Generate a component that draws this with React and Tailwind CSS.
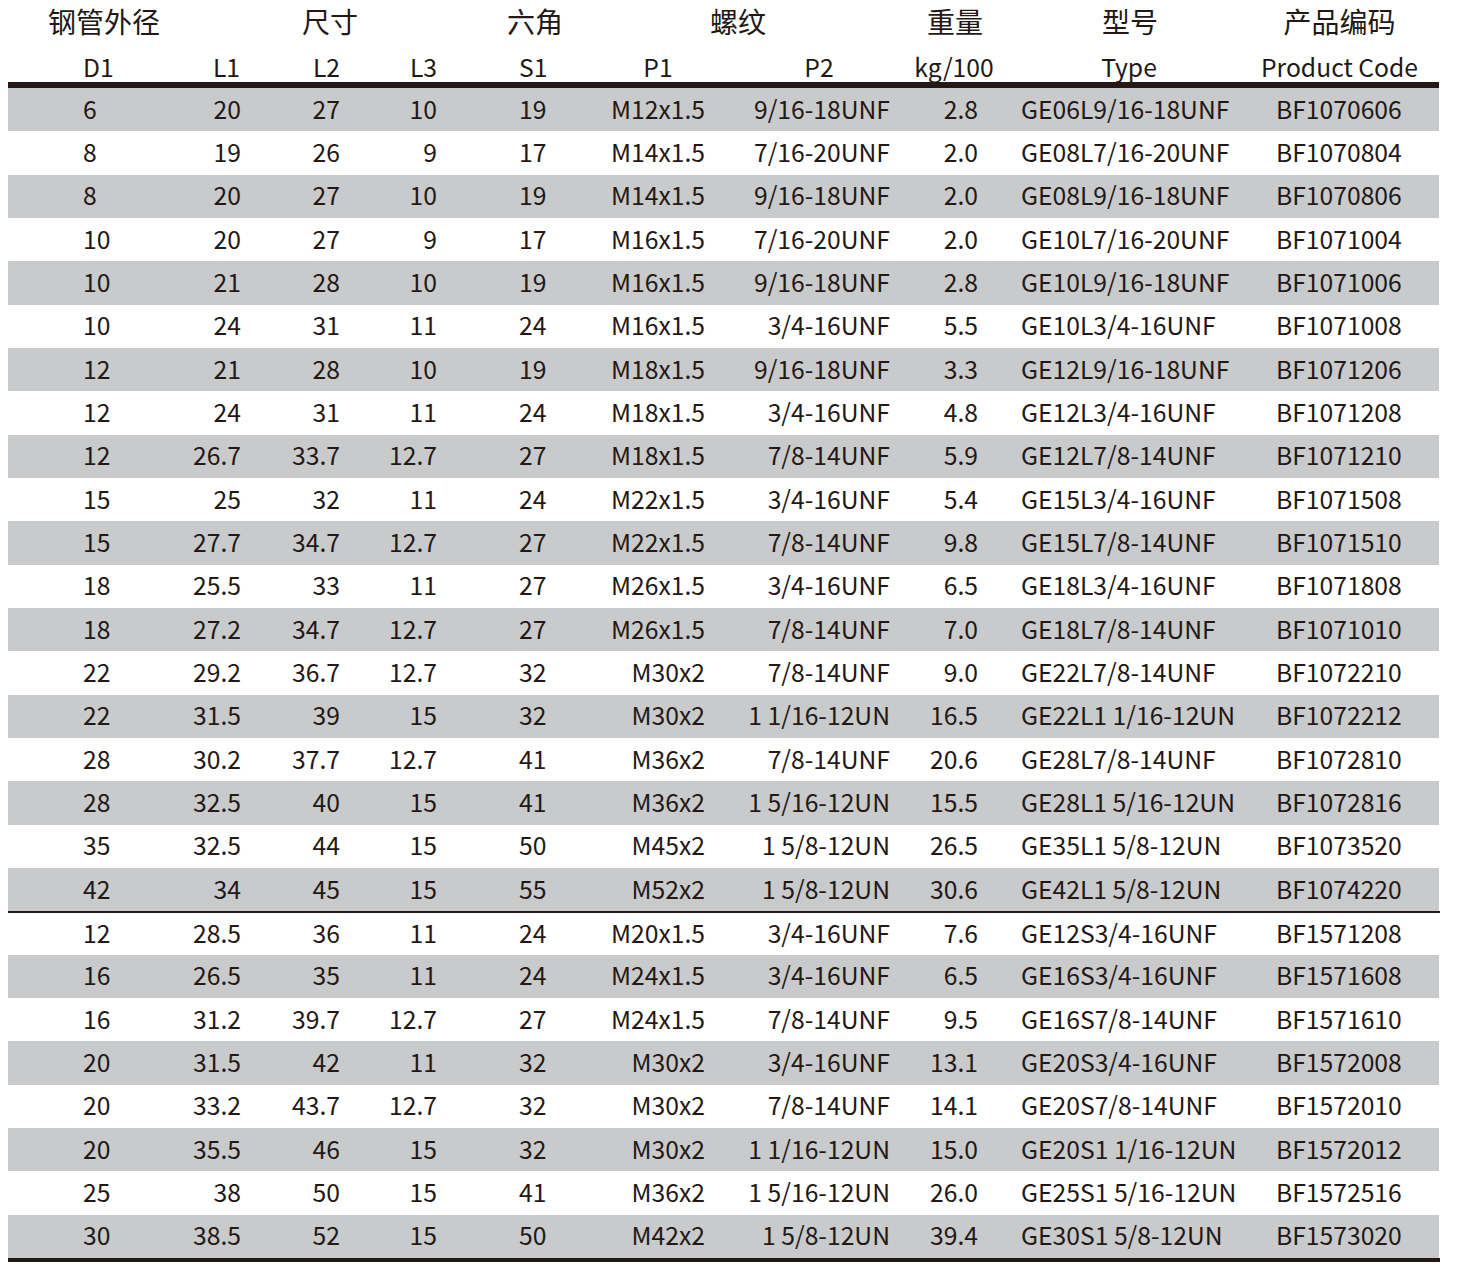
const rows = [
  ['6', '20', '27', '10', '19', 'M12x1.5', '9/16-18UNF', '2.8', 'GE06L9/16-18UNF', 'BF1070606'],
  ['8', '19', '26', '9', '17', 'M14x1.5', '7/16-20UNF', '2.0', 'GE08L7/16-20UNF', 'BF1070804'],
  ['8', '20', '27', '10', '19', 'M14x1.5', '9/16-18UNF', '2.0', 'GE08L9/16-18UNF', 'BF1070806'],
  ['10', '20', '27', '9', '17', 'M16x1.5', '7/16-20UNF', '2.0', 'GE10L7/16-20UNF', 'BF1071004'],
  ['10', '21', '28', '10', '19', 'M16x1.5', '9/16-18UNF', '2.8', 'GE10L9/16-18UNF', 'BF1071006'],
  ['10', '24', '31', '11', '24', 'M16x1.5', '3/4-16UNF', '5.5', 'GE10L3/4-16UNF', 'BF1071008'],
  ['12', '21', '28', '10', '19', 'M18x1.5', '9/16-18UNF', '3.3', 'GE12L9/16-18UNF', 'BF1071206'],
  ['12', '24', '31', '11', '24', 'M18x1.5', '3/4-16UNF', '4.8', 'GE12L3/4-16UNF', 'BF1071208'],
  ['12', '26.7', '33.7', '12.7', '27', 'M18x1.5', '7/8-14UNF', '5.9', 'GE12L7/8-14UNF', 'BF1071210'],
  ['15', '25', '32', '11', '24', 'M22x1.5', '3/4-16UNF', '5.4', 'GE15L3/4-16UNF', 'BF1071508'],
  ['15', '27.7', '34.7', '12.7', '27', 'M22x1.5', '7/8-14UNF', '9.8', 'GE15L7/8-14UNF', 'BF1071510'],
  ['18', '25.5', '33', '11', '27', 'M26x1.5', '3/4-16UNF', '6.5', 'GE18L3/4-16UNF', 'BF1071808'],
  ['18', '27.2', '34.7', '12.7', '27', 'M26x1.5', '7/8-14UNF', '7.0', 'GE18L7/8-14UNF', 'BF1071010'],
  ['22', '29.2', '36.7', '12.7', '32', 'M30x2', '7/8-14UNF', '9.0', 'GE22L7/8-14UNF', 'BF1072210'],
  ['22', '31.5', '39', '15', '32', 'M30x2', '1 1/16-12UN', '16.5', 'GE22L1 1/16-12UN', 'BF1072212'],
  ['28', '30.2', '37.7', '12.7', '41', 'M36x2', '7/8-14UNF', '20.6', 'GE28L7/8-14UNF', 'BF1072810'],
  ['28', '32.5', '40', '15', '41', 'M36x2', '1 5/16-12UN', '15.5', 'GE28L1 5/16-12UN', 'BF1072816'],
  ['35', '32.5', '44', '15', '50', 'M45x2', '1 5/8-12UN', '26.5', 'GE35L1 5/8-12UN', 'BF1073520'],
  ['42', '34', '45', '15', '55', 'M52x2', '1 5/8-12UN', '30.6', 'GE42L1 5/8-12UN', 'BF1074220'],
  ['12', '28.5', '36', '11', '24', 'M20x1.5', '3/4-16UNF', '7.6', 'GE12S3/4-16UNF', 'BF1571208'],
  ['16', '26.5', '35', '11', '24', 'M24x1.5', '3/4-16UNF', '6.5', 'GE16S3/4-16UNF', 'BF1571608'],
  ['16', '31.2', '39.7', '12.7', '27', 'M24x1.5', '7/8-14UNF', '9.5', 'GE16S7/8-14UNF', 'BF1571610'],
  ['20', '31.5', '42', '11', '32', 'M30x2', '3/4-16UNF', '13.1', 'GE20S3/4-16UNF', 'BF1572008'],
  ['20', '33.2', '43.7', '12.7', '32', 'M30x2', '7/8-14UNF', '14.1', 'GE20S7/8-14UNF', 'BF1572010'],
  ['20', '35.5', '46', '15', '32', 'M30x2', '1 1/16-12UN', '15.0', 'GE20S1 1/16-12UN', 'BF1572012'],
  ['25', '38', '50', '15', '41', 'M36x2', '1 5/16-12UN', '26.0', 'GE25S1 5/16-12UN', 'BF1572516'],
  ['30', '38.5', '52', '15', '50', 'M42x2', '1 5/8-12UN', '39.4', 'GE30S1 5/8-12UN', 'BF1573020'],
];

// per-column alignment of body cells (padding matches the printed sheet)
const cellCls = [
  'text-left pl-[75px]',
  'text-right pr-[9px]',
  'text-right pr-[10px]',
  'text-right pr-[23px]',
  'text-left pl-[59px]',
  'text-right pr-[15px]',
  'text-right pr-[10px]',
  'text-right pr-[22px]',
  'text-left pl-[21px]',
  'text-left pl-[26px]',
];

const subHead = [
  ['D1', 'text-left pl-[75px]'],
  ['L1', 'text-right pr-[10px]'],
  ['L2', 'text-right pr-[10px]'],
  ['L3', 'text-right pr-[23px]'],
  ['S1', 'text-left pl-[59px]'],
  ['P1', 'text-center pl-[16px]'],
  ['P2', 'text-center pl-[18px]'],
  ['kg/100', 'text-center pl-[8px]'],
  ['Type', 'text-center pl-[8px]'],
  ['Product Code', 'text-center pr-[10px]'],
];

const grid = 'grid grid-cols-[142px_100px_100px_110px_120px_140px_180px_100px_250px_189px]';

export default function App() {
  return (
    <div className="w-[1466px] h-[1266px] bg-white text-[#231815] font-['Noto_Sans_CJK_SC','Noto_Sans',sans-serif]">
      <div className="pl-[8px]">
        <div className={`${grid} h-[44px] items-center text-[28px] leading-none whitespace-nowrap pb-[2px]`}>
          <div className="text-left pl-[40px]">钢管外径</div>
          <div className="col-span-3 text-center pl-[50px]">尺寸</div>
          <div className="text-center pl-[30px]">六角</div>
          <div className="col-span-2 text-center pr-[4px]">螺纹</div>
          <div className="text-center pl-[10px]">重量</div>
          <div className="text-center pl-[10px]">型号</div>
          <div className="text-center pr-[10px]">产品编码</div>
        </div>
        <div className={`${grid} h-[38px] items-center text-[24.7px] leading-none pt-[6px] whitespace-nowrap`}>
          {subHead.map(([t, c]) => (
            <div key={t} className={c}>{t}</div>
          ))}
        </div>
        <div className="w-[1431px] h-[6px] bg-[#231815]" />
        {rows.map((r, i) => (
          <div
            key={i}
            className={`${grid} h-[43.33px] items-center text-[24.7px] leading-none pb-[3px] ${i % 2 === 0 ? 'bg-[#c9cacb]' : 'bg-white'} ${i === 19 ? 'border-t-2 border-[#231815] w-[1432px]' : 'w-[1431px]'}`}
          >
            {r.map((v, j) => (
              <div key={j} className={`whitespace-pre ${cellCls[j]}`}>{v}</div>
            ))}
          </div>
        ))}
        <div className="w-[1432px] h-[4px] bg-[#231815]" />
      </div>
    </div>
  );
}
